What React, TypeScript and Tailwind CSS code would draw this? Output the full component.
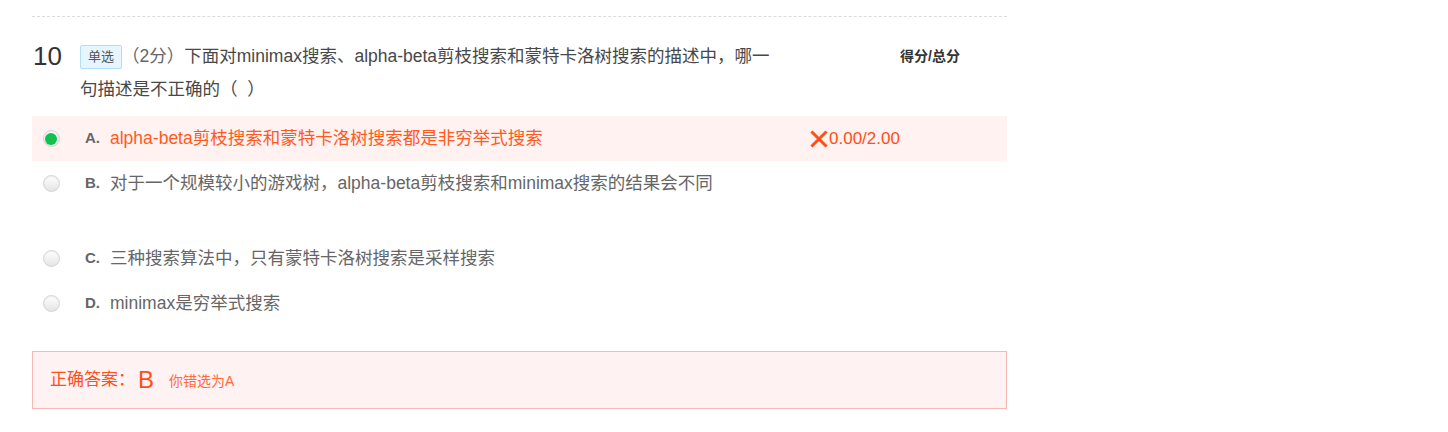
const font = { fontFamily: '"Liberation Sans", "Noto Sans CJK SC", sans-serif' };

interface OptionValues {
    label: string;
    text: string;
    selected?: boolean;
    wrong?: boolean;
    score?: string;
}

const options: OptionValues[] = [
    { label: 'A.', text: 'alpha-beta剪枝搜索和蒙特卡洛树搜索都是非穷举式搜索', selected: true, wrong: true, score: '0.00/2.00' },
    { label: 'B.', text: '对于一个规模较小的游戏树，alpha-beta剪枝搜索和minimax搜索的结果会不同' },
    { label: 'C.', text: '三种搜索算法中，只有蒙特卡洛树搜索是采样搜索' },
    { label: 'D.', text: 'minimax是穷举式搜索' },
];

const Radio = ({ checked }: { checked?: boolean }) => (
    <span className="flex h-[17px] w-[17px] items-center justify-center rounded-full border border-[#d4d4d4] bg-gradient-to-b from-[#ffffff] to-[#e4e4e4] shadow-[inset_0_1px_1px_rgba(0,0,0,0.08)]">
        {checked && <span className="h-[12px] w-[12px] rounded-full bg-[#12c04e]" />}
    </span>
);

const OptionRow = ({ label, text, selected, wrong, score }: OptionValues) => (
    <div className={`flex h-[45px] items-center ${wrong ? 'bg-[#fff2f1]' : ''}`}>
        <div className="flex w-[38px] justify-center">
            <Radio checked={selected} />
        </div>
        <span className="ml-[15px] w-[25px] text-[15px] font-bold text-[#666]">{label}</span>
        <span className={`w-[700px] text-[17.5px] ${wrong ? 'text-[#ff5a1e]' : 'text-[#666]'}`}>{text}</span>
        {score && (
            <span className="flex items-center text-[17px] text-[#ff4e17]">
                <svg width="18" height="18" viewBox="0 0 18 18" className="mr-[1px]">
                    <path d="M2.5 2.5 L15.5 15.5 M15.5 2.5 L2.5 15.5" stroke="#ff4e17" strokeWidth="3" strokeLinecap="square" />
                </svg>
                {score}
            </span>
        )}
    </div>
);

export default function App() {
    return (
        <div className="min-h-[432px] w-full bg-white" style={font}>
            <div className="ml-[32px] w-[975px] pt-[16px]">
                <div className="border-t border-dashed border-[#dcdcdc]" />

                <div className="mt-[23px] flex">
                    <span className="w-[48px] pl-[1px] text-[26px] leading-[32px] text-[#333]">10</span>
                    <div className="w-[700px] text-[17.5px] leading-[33px] text-[#555]">
                        <div className="flex items-center">
                            <span className="flex h-[24px] items-center rounded-[2px] border border-[#b3def7] bg-[#e6f5fe] px-[7px] text-[13px] text-[#555]">
                                单选
                            </span>
                            <span className="text-[#666]">（2分）</span>
                            <span className="text-[#484848]">下面对minimax搜索、alpha-beta剪枝搜索和蒙特卡洛树搜索的描述中，哪一</span>
                        </div>
                        <div className="text-[#484848]">句描述是不正确的（ &nbsp;）</div>
                    </div>
                    <span className="ml-[120px] text-[14px] font-bold leading-[32px] text-[#333]">得分/总分</span>
                </div>

                <div className="mt-[10px]">
                    {options.slice(0, 2).map((o) => (
                        <OptionRow key={o.label} {...o} />
                    ))}
                    <div className="h-[30px]" />
                    {options.slice(2).map((o) => (
                        <OptionRow key={o.label} {...o} />
                    ))}
                </div>

                <div className="mt-[25px] flex h-[58px] items-center border border-[#f8b8b6] bg-[#fff2f2] pl-[17px]">
                    <span className="text-[17px] text-[#ff4e17]">正确答案：</span>
                    <span className="ml-[3px] text-[24px] text-[#ff4e17]">B</span>
                    <span className="ml-[15px] mt-[3px] text-[14px] text-[#ff6a3a]">你错选为A</span>
                </div>
            </div>
        </div>
    );
}
